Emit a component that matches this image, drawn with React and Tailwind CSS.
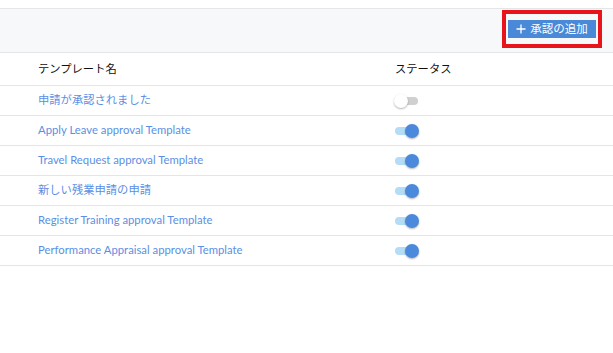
import React from 'react';

const rows = [
  { name: '申請が承認されました', on: false },
  { name: 'Apply Leave approval Template', on: true },
  { name: 'Travel Request approval Template', on: true },
  { name: '新しい残業申請の申請', on: true },
  { name: 'Register Training approval Template', on: true },
  { name: 'Performance Appraisal approval Template', on: true },
];

const Toggle = ({ on }) => (
  <div className="relative w-[26px] h-[14px] flex items-center">
    <div className={`ml-[1px] w-[23px] h-[8px] rounded-full ${on ? 'bg-[#b5dcf6]' : 'bg-[#d0d0d0]'}`} />
    <div
      className={`absolute top-0 w-[14px] h-[14px] rounded-full shadow-[0_1px_2px_rgba(0,0,0,0.3)] ${
        on ? 'left-[11px] bg-[#4a89dc]' : 'left-0 bg-white'
      }`}
    />
  </div>
);

const App = () => {
  return (
    <div
      className="w-[613px] h-[353px] bg-white text-[11.3px] overflow-hidden"
      style={{ fontFamily: 'Lato, "Noto Sans CJK JP", sans-serif' }}
    >
      <div className="h-[8px]" />
      <div className="h-[45px] bg-[#f7f8fa] border-y border-[#e5e5e5] flex justify-end items-start pr-[11px]">
        <div className="mt-[1px] border-[4px] border-[#e8141c] px-[2px] py-[6px]">
          <button className="w-[88px] h-[18px] bg-[#4a89d8] text-white text-[11.5px] flex items-center justify-center gap-[4px] leading-none">
            <svg width="10" height="10" viewBox="0 0 10 10" className="shrink-0">
              <path d="M5 0.5V9.5M0.5 5H9.5" stroke="white" strokeWidth="1.3" />
            </svg>
            <span>承認の追加</span>
          </button>
        </div>
      </div>

      <div className="h-[33px] border-b border-[#e5e5e5] flex items-center text-[#111]">
        <div className="w-[395px] pl-[38px]">テンプレート名</div>
        <div>ステータス</div>
      </div>

      {rows.map((r) => (
        <div key={r.name} className="h-[30px] border-b border-[#e5e5e5] flex items-center">
          <div className="w-[394px] pl-[38px] text-[#5b8fe4]">{r.name}</div>
          <Toggle on={r.on} />
        </div>
      ))}
    </div>
  );
};

export default App;
